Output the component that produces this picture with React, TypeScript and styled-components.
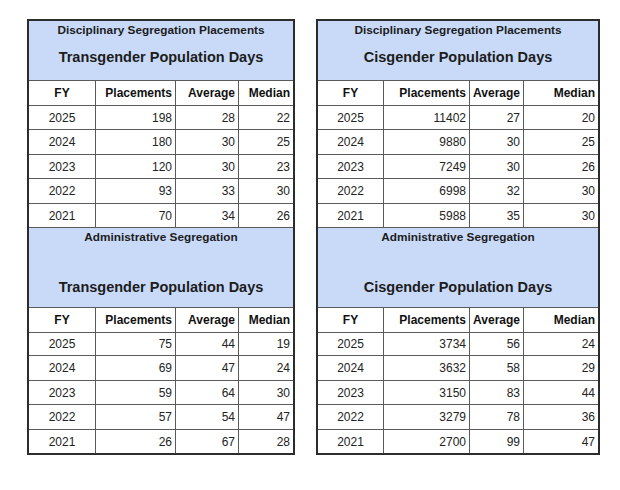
import React from "react";
import styled, { createGlobalStyle } from "styled-components";

const Global = createGlobalStyle`
  html, body { margin: 0; padding: 0; background: #ffffff; }
  body { font-family: "Liberation Sans", Arial, sans-serif; color: #1e1e1e; }
`;

const Page = styled.div`
  display: flex;
  align-items: flex-start;
  gap: 21px;
  padding: 19px 0 0 27px;
`;

const Sheet = styled.div<{ $cols: string }>`
  display: grid;
  grid-template-columns: ${(p) => p.$cols};
  gap: 1px;
  background: #5a5a5a;
  border: 2px solid #2c2c2c;
`;

const Title = styled.div<{ $h: number; $gap: number }>`
  grid-column: 1 / -1;
  height: ${(p) => p.$h}px;
  background: #c9daf8;
  display: flex;
  flex-direction: column;
  align-items: center;
  padding-top: 2px;
  box-sizing: border-box;
  gap: ${(p) => p.$gap}px;
`;

const SubTitle = styled.div`
  font-size: 11.8px;
  line-height: 15px;
  font-weight: bold;
  color: #1c1c1c;
`;

const MainTitle = styled.div`
  font-size: 14.5px;
  line-height: 18px;
  font-weight: bold;
  color: #1c1c1c;
`;

const Cell = styled.div<{ $head?: boolean; $center?: boolean; $h: number }>`
  background: #ffffff;
  height: ${(p) => p.$h}px;
  display: flex;
  align-items: center;
  justify-content: ${(p) => (p.$center ? "center" : "flex-end")};
  padding-right: ${(p) => (p.$center ? 0 : 3)}px;
  font-size: 12px;
  font-weight: ${(p) => (p.$head ? "bold" : "normal")};
  color: ${(p) => (p.$head ? "#111" : "#222")};
  white-space: nowrap;
  overflow: hidden;
`;

type Row = [string, string, string, string];

type Block = {
  sub: string;
  main: string;
  rows: Row[];
  h: number;
  gap: number;
  rowH: number[];
};

const headers: Row = ["FY", "Placements", "Average", "Median"];

function Table({ cols, blocks }: { cols: string; blocks: Block[] }) {
  return (
    <Sheet $cols={cols}>
      {blocks.map((b, bi) => (
        <React.Fragment key={bi}>
          <Title $h={b.h} $gap={b.gap}>
            <SubTitle>{b.sub}</SubTitle>
            <MainTitle>{b.main}</MainTitle>
          </Title>
          {headers.map((t, i) => (
            <Cell key={"h" + i} $head $center={i === 0} $h={24}>
              {t}
            </Cell>
          ))}
          {b.rows.map((r, ri) =>
            r.map((v, ci) => (
              <Cell key={ri + "-" + ci} $center={ci === 0} $h={b.rowH[ri]}>
                {v}
              </Cell>
            ))
          )}
        </React.Fragment>
      ))}
    </Sheet>
  );
}

const top = { h: 59, gap: 10, rowH: [23, 24, 23, 24, 23] };
const bottom = { h: 79, gap: 33, rowH: [22, 24, 23, 24, 23] };

const transgender: Block[] = [
  {
    ...top,
    sub: "Disciplinary Segregation Placements",
    main: "Transgender Population Days",
    rows: [
      ["2025", "198", "28", "22"],
      ["2024", "180", "30", "25"],
      ["2023", "120", "30", "23"],
      ["2022", "93", "33", "30"],
      ["2021", "70", "34", "26"],
    ],
  },
  {
    ...bottom,
    sub: "Administrative Segregation",
    main: "Transgender Population Days",
    rows: [
      ["2025", "75", "44", "19"],
      ["2024", "69", "47", "24"],
      ["2023", "59", "64", "30"],
      ["2022", "57", "54", "47"],
      ["2021", "26", "67", "28"],
    ],
  },
];

const cisgender: Block[] = [
  {
    ...top,
    sub: "Disciplinary Segregation Placements",
    main: "Cisgender Population Days",
    rows: [
      ["2025", "11402", "27", "20"],
      ["2024", "9880", "30", "25"],
      ["2023", "7249", "30", "26"],
      ["2022", "6998", "32", "30"],
      ["2021", "5988", "35", "30"],
    ],
  },
  {
    ...bottom,
    sub: "Administrative Segregation",
    main: "Cisgender Population Days",
    rows: [
      ["2025", "3734", "56", "24"],
      ["2024", "3632", "58", "29"],
      ["2023", "3150", "83", "44"],
      ["2022", "3279", "78", "36"],
      ["2021", "2700", "99", "47"],
    ],
  },
];

export default function App() {
  return (
    <>
      <Global />
      <Page>
        <Table cols="66px 79px 62px 54px" blocks={transgender} />
        <Table cols="65px 85px 53px 74px" blocks={cisgender} />
      </Page>
    </>
  );
}
